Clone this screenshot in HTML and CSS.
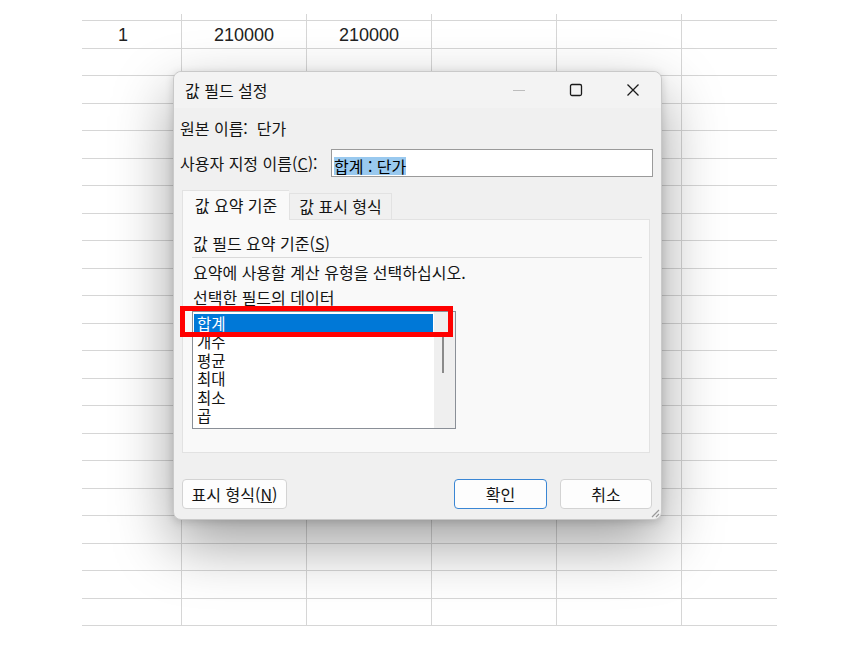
FILE: index.html
```html
<!DOCTYPE html>
<html lang="ko">
<head>
  <meta charset="UTF-8">
  <title>값 필드 설정</title>
  <link rel="stylesheet" href="styles.css">
</head>
<body>
  <div class="sheet">
    <div class="row row-head"><div class="cell c-first"></div><div class="cell"></div><div class="cell"></div><div class="cell"></div><div class="cell"></div><div class="cell c-last"></div></div>
    <div class="row"><div class="cell c-first num-left">1</div><div class="cell num">210000</div><div class="cell num">210000</div><div class="cell"></div><div class="cell"></div><div class="cell c-last"></div></div>
    <div class="row"><div class="cell c-first"></div><div class="cell"></div><div class="cell"></div><div class="cell"></div><div class="cell"></div><div class="cell c-last"></div></div>
    <div class="row"><div class="cell c-first"></div><div class="cell"></div><div class="cell"></div><div class="cell"></div><div class="cell"></div><div class="cell c-last"></div></div>
    <div class="row"><div class="cell c-first"></div><div class="cell"></div><div class="cell"></div><div class="cell"></div><div class="cell"></div><div class="cell c-last"></div></div>
    <div class="row"><div class="cell c-first"></div><div class="cell"></div><div class="cell"></div><div class="cell"></div><div class="cell"></div><div class="cell c-last"></div></div>
    <div class="row"><div class="cell c-first"></div><div class="cell"></div><div class="cell"></div><div class="cell"></div><div class="cell"></div><div class="cell c-last"></div></div>
    <div class="row"><div class="cell c-first"></div><div class="cell"></div><div class="cell"></div><div class="cell"></div><div class="cell"></div><div class="cell c-last"></div></div>
    <div class="row"><div class="cell c-first"></div><div class="cell"></div><div class="cell"></div><div class="cell"></div><div class="cell"></div><div class="cell c-last"></div></div>
    <div class="row"><div class="cell c-first"></div><div class="cell"></div><div class="cell"></div><div class="cell"></div><div class="cell"></div><div class="cell c-last"></div></div>
    <div class="row"><div class="cell c-first"></div><div class="cell"></div><div class="cell"></div><div class="cell"></div><div class="cell"></div><div class="cell c-last"></div></div>
    <div class="row"><div class="cell c-first"></div><div class="cell"></div><div class="cell"></div><div class="cell"></div><div class="cell"></div><div class="cell c-last"></div></div>
    <div class="row"><div class="cell c-first"></div><div class="cell"></div><div class="cell"></div><div class="cell"></div><div class="cell"></div><div class="cell c-last"></div></div>
    <div class="row"><div class="cell c-first"></div><div class="cell"></div><div class="cell"></div><div class="cell"></div><div class="cell"></div><div class="cell c-last"></div></div>
    <div class="row"><div class="cell c-first"></div><div class="cell"></div><div class="cell"></div><div class="cell"></div><div class="cell"></div><div class="cell c-last"></div></div>
    <div class="row"><div class="cell c-first"></div><div class="cell"></div><div class="cell"></div><div class="cell"></div><div class="cell"></div><div class="cell c-last"></div></div>
    <div class="row"><div class="cell c-first"></div><div class="cell"></div><div class="cell"></div><div class="cell"></div><div class="cell"></div><div class="cell c-last"></div></div>
    <div class="row"><div class="cell c-first"></div><div class="cell"></div><div class="cell"></div><div class="cell"></div><div class="cell"></div><div class="cell c-last"></div></div>
    <div class="row"><div class="cell c-first"></div><div class="cell"></div><div class="cell"></div><div class="cell"></div><div class="cell"></div><div class="cell c-last"></div></div>
    <div class="row"><div class="cell c-first"></div><div class="cell"></div><div class="cell"></div><div class="cell"></div><div class="cell"></div><div class="cell c-last"></div></div>
    <div class="row"><div class="cell c-first"></div><div class="cell"></div><div class="cell"></div><div class="cell"></div><div class="cell"></div><div class="cell c-last"></div></div>
    <div class="row"><div class="cell c-first"></div><div class="cell"></div><div class="cell"></div><div class="cell"></div><div class="cell"></div><div class="cell c-last"></div></div>
    <div class="row"><div class="cell c-first"></div><div class="cell"></div><div class="cell"></div><div class="cell"></div><div class="cell"></div><div class="cell c-last"></div></div>
  </div>

  <div class="dialog">
    <div class="titlebar">
      <span class="title">값 필드 설정</span>
      <div class="win-controls">
        <span class="win-btn">
          <svg width="14" height="14" viewBox="0 0 14 14"><path d="M1 7.5h12" stroke="#bdbdbd" stroke-width="1"/></svg>
        </span>
        <span class="win-btn">
          <svg width="14" height="14" viewBox="0 0 14 14"><rect x="1.5" y="1.5" width="11" height="11" rx="1.5" fill="none" stroke="#1a1a1a" stroke-width="1.3"/></svg>
        </span>
        <span class="win-btn">
          <svg width="14" height="14" viewBox="0 0 14 14"><path d="M1.5 1.5l11 11M12.5 1.5l-11 11" stroke="#1a1a1a" stroke-width="1.3"/></svg>
        </span>
      </div>
    </div>

    <div class="dlg-body">
      <div class="source-name">원본 이름:&nbsp;&nbsp;단가</div>

      <div class="name-row">
        <label>사용자 지정 이름(<u>C</u>):</label>
        <div class="name-input"><span class="text-sel">합계 : 단가</span></div>
      </div>

      <div class="tabs">
        <div class="tab active">값 요약 기준</div>
        <div class="tab">값 표시 형식</div>
      </div>

      <div class="panel">
        <div class="group-title">값 필드 요약 기준(<u>S</u>)</div>
        <div class="separator"></div>
        <p class="hint">요약에 사용할 계산 유형을 선택하십시오.</p>
        <p class="hint second">선택한 필드의 데이터</p>
        <div class="listbox">
          <ul class="items">
            <li class="selected">합계</li>
            <li>개수</li>
            <li>평균</li>
            <li>최대</li>
            <li>최소</li>
            <li>곱</li>
          </ul>
          <div class="scrollbar"><div class="thumb"></div></div>
        </div>
      </div>

      <div class="buttons">
        <button class="btn btn-format">표시 형식(<u>N</u>)</button>
        <button class="btn btn-ok">확인</button>
        <button class="btn btn-cancel">취소</button>
      </div>
    </div>

    <svg class="grip" width="12" height="12" viewBox="0 0 12 12">
      <path d="M11 4L4 11M11 8L8 11" stroke="#9a9a9a" stroke-width="1.2"/>
    </svg>
  </div>

  <div class="mark"></div>
</body>
</html>
```

FILE: styles.css
```css
body {
  margin: 0;
  background-color: #fff;
  font-family: "Noto Sans CJK KR", "Noto Sans", sans-serif;
  color: #141414;
}

/* spreadsheet behind the dialog */
.sheet {
  padding: 14px 0 0 82px;
  font-family: "Liberation Sans", Arial, sans-serif;
  font-size: 18px;
  color: #222;
}

.row {
  display: flex;
  box-sizing: border-box;
  height: 27.5px;
  border-bottom: 1px solid #d6d6d6;
  width: 695px;
}

.row-head {
  height: 7px;
}

.cell {
  box-sizing: border-box;
  width: 125px;
  border-right: 1px solid #d6d6d6;
  line-height: 29px;
}

.c-first {
  width: 100px;
}

.c-last {
  width: 95px;
  border-right: none;
}

.num {
  text-align: center;
}

.num-left {
  padding-left: 36px;
}

/* dialog window */
.dialog {
  position: absolute;
  left: 173px;
  top: 71px;
  width: 489px;
  height: 449px;
  box-sizing: border-box;
  border: 1px solid #c9c9c9;
  border-radius: 8px;
  background-color: #f0f0f0;
  box-shadow: 0 24px 60px rgba(0, 0, 0, 0.38), 0 2px 8px rgba(0, 0, 0, 0.15);
  font-size: 16px;
}

.titlebar {
  display: flex;
  align-items: center;
  height: 36px;
  padding-left: 11px;
  border-radius: 8px 8px 0 0;
  background-color: #f3f3f3;
}

.title {
  flex: 1;
}

.win-controls {
  display: flex;
}

.win-btn {
  display: flex;
  align-items: center;
  justify-content: center;
  width: 57px;
  height: 36px;
}

.dlg-body {
  padding: 0 8px 0 6px;
}

.source-name {
  margin-top: 10px;
  line-height: 20px;
}

.name-row {
  display: flex;
  align-items: center;
  margin-top: 11px;
  height: 28px;
}

.name-row label {
  flex: 1;
}

.name-input {
  box-sizing: border-box;
  width: 322px;
  height: 28px;
  padding: 4px 0 0 2px;
  border: 1px solid #9a9a9a;
  background-color: #fff;
}

.text-sel {
  display: inline-block;
  line-height: 18px;
  background-color: #99c9ef;
  color: #000;
}

.tabs {
  display: flex;
  align-items: flex-end;
  height: 29px;
  margin: 13px 0 0 2px;
}

.tab {
  box-sizing: border-box;
  height: 26px;
  width: 103px;
  line-height: 24px;
  text-align: center;
  border: 1px solid #e2e2e2;
  border-bottom: none;
  background-color: #f0f0f0;
}

.tab.active {
  position: relative;
  z-index: 1;
  width: 107px;
  height: 30px;
  margin-bottom: -1px;
  line-height: 28px;
  background-color: #f9f9f9;
  border-right: none;
}

.panel {
  box-sizing: border-box;
  height: 234px;
  margin: 0 3px 0 2px;
  padding: 13px 7px 0 10px;
  border: 1px solid #e2e2e2;
  background-color: #f9f9f9;
}

.group-title {
  line-height: 20px;
}

.separator {
  height: 1px;
  margin: 4px 0 0 -1px;
  background-color: #d9d9d9;
}

.hint {
  margin: 4px 0 0;
  line-height: 20px;
}

.hint.second {
  margin-top: 5px;
}

.listbox {
  display: flex;
  box-sizing: border-box;
  width: 264px;
  height: 118px;
  margin: 4px 0 0 -1px;
  padding: 2px 0 0 1px;
  border: 1px solid #8a8f97;
  background-color: #fff;
}

.items {
  list-style: none;
  margin: 0;
  padding: 0;
  width: 239px;
  font-size: 15.5px;
}

.items li {
  height: 18.4px;
  line-height: 18.4px;
  padding-left: 3px;
}

.items li.selected {
  background-color: #0078d7;
  color: #fff;
}

.scrollbar {
  width: 21px;
  margin: -2px 0 0 1px;
  background-color: #efefef;
}

.thumb {
  width: 2px;
  height: 36px;
  margin: 25px 0 0 8px;
  background-color: #8a8a8a;
}

.buttons {
  display: flex;
  margin: 26px 1px 0 2px;
}

.btn {
  box-sizing: border-box;
  height: 30px;
  padding: 0;
  border: 1px solid #d3d3d3;
  border-radius: 4px;
  background-color: #fdfdfd;
  font-family: inherit;
  font-size: 16px;
  color: #141414;
}

.btn-format {
  width: 105px;
}

.btn-ok {
  width: 93px;
  margin-left: auto;
  border-color: #3a86d4;
}

.btn-cancel {
  width: 92px;
  margin-left: 13px;
}

.grip {
  position: absolute;
  right: 1px;
  bottom: 1px;
}

/* red annotation box */
.mark {
  position: absolute;
  left: 180px;
  top: 306px;
  width: 263px;
  height: 21px;
  border: 5px solid #ff0000;
}
```
